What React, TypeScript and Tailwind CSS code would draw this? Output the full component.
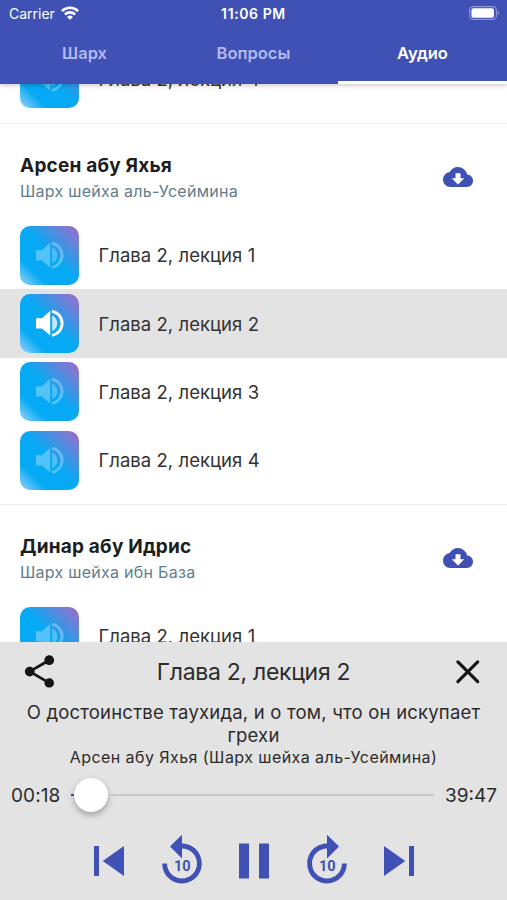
import { clsx } from 'clsx';

interface Lecture {
  id: number;
  title: string;
}

interface Section {
  author: string;
  source: string;
  lectures: Lecture[];
}

const TABS = ['Шарх', 'Вопросы', 'Аудио'];

const SECTIONS: Section[] = [
  {
    author: 'Арсен абу Яхья',
    source: 'Шарх шейха аль-Усеймина',
    lectures: [
      { id: 1, title: 'Глава 2, лекция 1' },
      { id: 2, title: 'Глава 2, лекция 2' },
      { id: 3, title: 'Глава 2, лекция 3' },
      { id: 4, title: 'Глава 2, лекция 4' },
    ],
  },
  {
    author: 'Динар абу Идрис',
    source: 'Шарх шейха ибн База',
    lectures: [{ id: 5, title: 'Глава 2, лекция 1' }],
  },
];

const PLAYING_ID = 2;

function StatusBar() {
  return (
    <div className="grid h-[27px] grid-cols-3 items-center px-[9px]">
      <div className="flex items-center gap-[6px]">
        <span className="text-[14px]">Carrier</span>
        <svg viewBox="0 0 18 14" className="-mt-[2px] h-[14px] w-[18px]" fill="none" stroke="currentColor" strokeWidth="2.6">
          <path d="M.9 5.1a11.6 11.6 0 0 1 16.2 0M3.9 8.5a7.3 7.3 0 0 1 10.2 0" />
          <path d="M9 13.8 6 10.9a4.3 4.3 0 0 1 6 0z" fill="currentColor" stroke="none" />
        </svg>
      </div>
      <span className="text-center text-[14px] font-semibold tracking-[0.6px]">11:06 PM</span>
      <svg viewBox="0 0 31 14" className="-mt-px -mr-[2px] h-[14px] w-[31px] justify-self-end">
        <rect x="0.6" y="0.6" width="26.8" height="12.8" rx="3.6" fill="none" stroke="#fff" strokeOpacity=".4" strokeWidth="1.1" />
        <rect x="2.4" y="2.2" width="22.6" height="9.6" rx="2" fill="#fff" />
        <path d="M28.7 4.8c1.8.7 1.8 3.7 0 4.4z" fill="#fff" fillOpacity=".45" />
      </svg>
    </div>
  );
}

function LectureTile({ active }: { active?: boolean }) {
  return (
    <svg viewBox="0 0 59 59" className="h-[59px] w-[59px] shrink-0 rounded-[10px]">
      <defs>
        <linearGradient id="tile" x1="0" y1="1" x2="1" y2="0">
          <stop offset="0" stopColor="#8ad3f9" />
          <stop offset=".1" stopColor="#5cc2f7" />
          <stop offset=".23" stopColor="#06a9f4" />
          <stop offset=".52" stopColor="#06a9f4" />
          <stop offset=".88" stopColor="#7d7ad2" />
          <stop offset="1" stopColor="#a065ca" />
        </linearGradient>
      </defs>
      <rect width="59" height="59" fill="url(#tile)" />
      <g fill="#fff" opacity={active ? 1 : 0.3}>
        <path d="M16 24.2h6l8.2-7.4v24.8L22 34.4h-6z" />
        <path d="M32.2 21.4c3.2 1.4 5.1 4.5 5.1 7.8s-1.9 6.5-5.1 8z" opacity={active ? 0.75 : 0.9} />
        <path d="M32 17.2a12.3 12.3 0 0 1 0 24.2" fill="none" stroke="#fff" strokeWidth="2.9" />
      </g>
    </svg>
  );
}

function LectureRow({ title, active }: { title: string; active?: boolean }) {
  return (
    <li className={clsx('flex h-[68.4px] items-center gap-[19.5px] pl-5', active && 'bg-[#e3e3e3]')}>
      <LectureTile active={active} />
      <span className="pt-[2px] text-[18.5px] tracking-[0.04px] text-[#333]">{title}</span>
    </li>
  );
}

function SectionBlock({ section }: { section: Section }) {
  return (
    <section className="border-t border-[#f0f0f0] pb-[9.5px]">
      <div className="flex h-[97px] items-center justify-between pt-[10px] pr-[34px] pl-[20px]">
        <div>
          <h2 className="pt-[2px] text-[19px] leading-[26px] font-bold tracking-[0.2px] text-[#1d1d1d]">{section.author}</h2>
          <p className="text-[16px] leading-[25px] tracking-[0.27px] text-[#607d8b]">{section.source}</p>
        </div>
        <svg viewBox="0 0 24 24" className="mb-[2px] h-[30px] w-[30px]" fill="#3f51b5">
          <path d="M19.35 10.04A7.49 7.49 0 0 0 12 4C9.11 4 6.6 5.64 5.35 8.04A5.994 5.994 0 0 0 0 14c0 3.31 2.69 6 6 6h13c2.76 0 5-2.24 5-5 0-2.64-2.05-4.78-4.65-4.96zM17 13l-5 5-5-5h3V9h4v4h3z" />
        </svg>
      </div>
      <ul>
        {section.lectures.map((l) => (
          <LectureRow key={l.id} title={l.title} active={l.id === PLAYING_ID} />
        ))}
      </ul>
    </section>
  );
}

function ControlIcon({ path, label }: { path: string; label?: string }) {
  return (
    <button className="h-[60px] w-[60px]">
      <svg viewBox="0 0 24 24" className="h-full w-full" fill="#3f51b5">
        <path d={path} />
        {label && (
          <text x="12.1" y="15.9" textAnchor="middle" fontSize="5.8" fontWeight="700" fontFamily="Roboto, sans-serif">{label}</text>
        )}
      </svg>
    </button>
  );
}

function Player() {
  return (
    <footer className="flex h-[258px] shrink-0 flex-col bg-[#e3e3e3] text-[#2b2b2b]">
      <div className="flex h-[59px] items-center justify-between px-5">
        <svg viewBox="0 0 24 24" className="h-[39px] w-[39px]" fill="#161616">
          <path d="M18 16.08c-.76 0-1.44.3-1.96.77L8.91 12.7c.05-.23.09-.46.09-.7s-.04-.47-.09-.7l7.05-4.11c.54.5 1.25.81 2.04.81 1.66 0 3-1.34 3-3s-1.34-3-3-3-3 1.34-3 3c0 .24.04.47.09.7L8.04 9.81C7.5 9.31 6.79 9 6 9c-1.66 0-3 1.34-3 3s1.34 3 3 3c.79 0 1.5-.31 2.04-.81l7.12 4.16c-.05.21-.08.43-.08.65 0 1.61 1.31 2.92 2.92 2.92s2.92-1.31 2.92-2.92-1.31-2.92-2.92-2.92z" />
        </svg>
        <h3 className="pt-[1px] text-[23px] tracking-[-0.3px]">Глава 2, лекция 2</h3>
        <svg viewBox="0 0 39 39" className="h-[39px] w-[39px]" stroke="#161616" strokeWidth="3.2" strokeLinecap="round">
          <path d="M9.9 9.9 29.7 29.7M29.7 9.9 9.9 29.7" />
        </svg>
      </div>
      <p className="px-5 text-center text-[18.5px] leading-[23px] tracking-[0.2px]">
        О достоинстве таухида, и о том, что он искупает грехи
      </p>
      <p className="pt-[1px] text-center text-[16px] leading-[19px] tracking-[0.44px]">Арсен абу Яхья (Шарх шейха аль-Усеймина)</p>
      <div className="flex h-[56px] items-center justify-between pr-[10px] pl-[11px] text-[19px]">
        <span className="pt-[2px] tracking-[0.1px]">00:18</span>
        <div className="flex w-[363px] items-center">
          <div className="h-[2px] w-[3px] bg-[#3f51b5]" />
          <div className="h-[34px] w-[34px] rounded-full bg-white shadow-[0_3px_6px_rgba(0,0,0,0.3)]" />
          <div className="h-[2px] flex-1 bg-[#c8c8c8]" />
        </div>
        <span className="pt-[2px]">39:47</span>
      </div>
      <div className="mt-[8px] flex justify-center gap-[12.5px] pl-[1px]">
        <ControlIcon path="M6 6h2v12H6zm3.5 6 8.5 6V6z" />
        <ControlIcon label="10" path="M12 5V1.5L7.2 6.2l4.8 4.8V7c3.31 0 6 2.69 6 6s-2.69 6-6 6-6-2.69-6-6H4.1c0 4.42 3.48 7.95 7.9 7.95s7.9-3.53 7.9-7.95S16.42 5 12 5z" />
        <ControlIcon path="M6 19h4V5H6zm8-14v14h4V5z" />
        <ControlIcon label="10" path="M12 5V1.5l4.8 4.7L12 11V7c-3.31 0-6 2.69-6 6s2.69 6 6 6 6-2.69 6-6h1.9c0 4.42-3.48 7.95-7.9 7.95S4.1 17.42 4.1 13 7.58 5 12 5z" />
        <ControlIcon path="m6 18 8.5-6L6 6zM16 6v12h2V6z" />
      </div>
    </footer>
  );
}

export default function App() {
  return (
    <div className="flex h-[900px] w-[507px] flex-col overflow-hidden bg-white font-['Inter','Liberation_Sans',sans-serif]">
      <header className="z-10 h-[84px] shrink-0 bg-[#3f51b5] text-white shadow-[0_2px_4px_rgba(0,0,0,0.18)]">
        <StatusBar />
        <nav className="grid h-[57px] grid-cols-3">
          {TABS.map((tab) => (
            <button key={tab}
              className={clsx('border-b-[3px] pb-[1px] text-[16.5px] font-semibold',
                tab === 'Аудио' ? 'border-white text-white' : 'border-transparent text-[#b3baf0]')}>
              {tab}
            </button>
          ))}
        </nav>
      </header>

      <main className="flex min-h-0 flex-1 flex-col overflow-hidden">
        {/* tail of the section scrolled under the header */}
        <div className="flex h-[39px] shrink-0 flex-col justify-end pb-[10px]">
          <ul><LectureRow title="Глава 2, лекция 4" /></ul>
        </div>
        {SECTIONS.map((s) => <SectionBlock key={s.author} section={s} />)}
      </main>

      <Player />
    </div>
  );
}
